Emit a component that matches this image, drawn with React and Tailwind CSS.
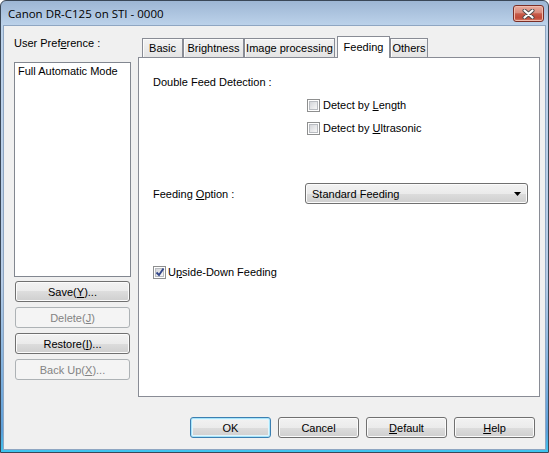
import React from "react";

function Btn({ children, className = "", disabled, primary }) {
  let look =
    "border-[#707070] bg-[linear-gradient(#f2f2f2_0%,#ebebeb_50%,#dddddd_50%,#cfcfcf_100%)] shadow-[inset_0_0_0_1px_#fbfbfb] text-black";
  if (primary)
    look =
      "border-[#3c7fb1] bg-[linear-gradient(#f2f2f2_0%,#ebebeb_50%,#dddddd_50%,#cfcfcf_100%)] shadow-[inset_0_0_0_1px_#a6e4fa,inset_0_0_0_2px_#e3f5fc] text-black";
  if (disabled)
    look = "border-[#adb2b5] bg-[#f4f4f4] text-[#838383]";
  return (
    <div
      className={`flex h-[21px] items-center justify-center rounded-[3px] border ${look} ${className}`}
    >
      {children}
    </div>
  );
}

function CheckBox({ checked }) {
  return (
    <div className="flex h-[13px] w-[13px] shrink-0 items-center justify-center border border-[#8e8f8f] bg-white">
      <div className="relative h-[9px] w-[9px] border border-[#b9bcc1] bg-[linear-gradient(135deg,#d4d6da,#f7f7f7)]">
        {checked && (
          <svg
            className="absolute left-[-2px] top-[-3px]"
            width="12"
            height="12"
            viewBox="0 0 12 12"
          >
            <path
              d="M2.5 6.5 L5 9 L9.5 2.5"
              fill="none"
              stroke="#33478a"
              strokeWidth="1.9"
            />
          </svg>
        )}
      </div>
    </div>
  );
}

function Tab({ children, className = "", active }) {
  if (active)
    return (
      <div
        className={`relative z-10 -mb-px flex h-[22px] items-center justify-center border border-b-0 border-[#898c95] bg-white pb-[2px] ${className}`}
      >
        {children}
      </div>
    );
  return (
    <div
      className={`flex h-[19px] items-center justify-center border border-b-0 border-[#898c95] bg-[linear-gradient(#f3f3f3,#e4e4e4)] shadow-[inset_1px_1px_0_#fcfcfc] ${className}`}
    >
      {children}
    </div>
  );
}

export default function App() {
  return (
    <div className="h-[453px] w-[549px] font-['Liberation_Sans',Arial,sans-serif] text-[11px] leading-[14px] text-black">
      <div className="flex h-full flex-col rounded-t-[6px] border border-[#3a4757] bg-[linear-gradient(#9db6d4,#bcd2ea_24px,#b6cce6_280px,#5c9fd9_430px,#3cc5ef)] px-[2px] pb-[2px]">
        {/* title bar */}
        <div className="flex h-[24px] shrink-0 items-start justify-between pl-[5px] pr-[2px]">
          <div className="mt-[5px] font-['Open_Sans',sans-serif] text-[11.5px] leading-[15px]">
            Canon DR-C125 on STI - 0000
          </div>
          <div className="mt-[4px] flex h-[17px] w-[31px] items-center justify-center rounded-[3px] border border-[#7a2e26] bg-[linear-gradient(#eaab9d,#d98b7c_45%,#c75b49_52%,#c14a38_80%,#d8806a)] shadow-[inset_0_0_0_1px_#f0bcae]">
            <svg width="13" height="10" viewBox="0 0 13 10">
              <path
                d="M2.5 1.5 L10.5 8.5 M10.5 1.5 L2.5 8.5"
                stroke="#4a4a4a"
                strokeWidth="4"
                strokeLinecap="round"
              />
              <path
                d="M2.5 1.5 L10.5 8.5 M10.5 1.5 L2.5 8.5"
                stroke="#ffffff"
                strokeWidth="2.2"
                strokeLinecap="round"
              />
            </svg>
          </div>
        </div>

        {/* client area */}
        <div className="flex flex-1 flex-col border border-[#8fa6c2] bg-[#f0f0f0] pl-[10px] pt-[10px]">
          <div className="flex h-[361px]">
            {/* User preference column */}
            <div className="flex w-[117px] flex-col">
              <div className="h-[26px]">
                User Pref<u>e</u>rence :
              </div>
              <div className="h-[215px] border border-[#828790] bg-white px-[3px] pt-[1px]">
                Full Automatic Mode
              </div>
              <div className="ml-px mt-[4px] flex w-[115px] flex-col gap-[5px]">
                <Btn>
                  Save(<u>Y</u>)...
                </Btn>
                <Btn disabled>
                  Delete(<u>J</u>)
                </Btn>
                <Btn>
                  Restore(<u>I</u>)...
                </Btn>
                <Btn disabled>
                  Back Up(<u>X</u>)...
                </Btn>
              </div>
            </div>

            {/* tab control */}
            <div className="ml-[7px] flex w-[402px] flex-col">
              <div className="flex h-[21px] items-end pl-[4px]">
                <Tab className="w-[41px]">Basic</Tab>
                <Tab className="w-[61px]">Brightness</Tab>
                <Tab className="w-[91px]">Image processing</Tab>
                <Tab active className="ml-[2px] w-[53px]">
                  Feeding
                </Tab>
                <Tab className="w-[38px]">Others</Tab>
              </div>
              <div className="flex h-[340px] flex-col border border-[#898c95] bg-white pl-[14px]">
                <div className="mt-[17px]">Double Feed Detection :</div>
                <div className="ml-[154px] mt-[9px] flex items-center gap-[3px]">
                  <CheckBox />
                  <span>
                    Detect by <u>L</u>ength
                  </span>
                </div>
                <div className="ml-[154px] mt-[9px] flex items-center gap-[3px]">
                  <CheckBox />
                  <span>
                    Detect by <u>U</u>ltrasonic
                  </span>
                </div>
                <div className="mt-[48px] flex items-center">
                  <div className="w-[152px]">
                    Feeding <u>O</u>ption :
                  </div>
                  <div className="flex h-[21px] w-[223px] items-center justify-between rounded-[3px] border border-[#707070] bg-[linear-gradient(#f2f2f2_0%,#ebebeb_50%,#dddddd_50%,#cfcfcf_100%)] pl-[6px] pr-[6px] shadow-[inset_0_0_0_1px_#fbfbfb]">
                    <span>Standard Feeding</span>
                    <svg width="7" height="4" viewBox="0 0 7 4">
                      <path d="M0 0 H7 L3.5 4 Z" fill="#000" />
                    </svg>
                  </div>
                </div>
                <div className="mt-[61px] flex items-center gap-[2px]">
                  <CheckBox checked />
                  <span>
                    U<u>p</u>side-Down Feeding
                  </span>
                </div>
              </div>
            </div>
          </div>

          {/* dialog buttons */}
          <div className="mt-[20px] flex justify-end gap-[7px] pr-[10px]">
            <Btn primary className="w-[81px]">
              OK
            </Btn>
            <Btn className="w-[81px]">Cancel</Btn>
            <Btn className="w-[81px]">
              <u>D</u>efault
            </Btn>
            <Btn className="w-[81px]">
              <u>H</u>elp
            </Btn>
          </div>
        </div>
      </div>
    </div>
  );
}
